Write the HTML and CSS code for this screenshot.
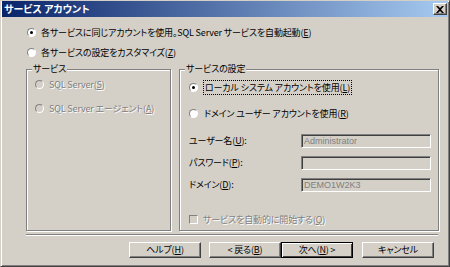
FILE: index.html
```html
<!DOCTYPE html>
<html lang="ja">
<head>
  <meta charset="UTF-8">
  <title>サービス アカウント</title>
  <link rel="stylesheet" href="styles.css">
</head>
<body>

  <div class="window">
    <div class="titlebar">
      <span class="title">サービス アカウント</span>
      <span class="close-btn">
        <svg width="8" height="7" viewBox="0 0 8 7">
          <path d="M0 0h2l2 2 2-2h2L5 3.5 8 7H6L4 5 2 7H0l3-3.5z" fill="#000"/>
        </svg>
      </span>
    </div>

    <div class="content">
      <label class="option top-option">
        <span class="radio checked"></span>
        <span>各サービスに同じアカウントを使用。SQL Server サービスを自動起動(<u>E</u>)</span>
      </label>
      <label class="option top-option second">
        <span class="radio"></span>
        <span>各サービスの設定をカスタマイズ(<u>Z</u>)</span>
      </label>

      <div class="groups">
        <div class="group services">
          <span class="group-label">サービス</span>
          <label class="option disabled">
            <span class="radio"></span>
            <span>SQL Server(<u>S</u>)</span>
          </label>
          <label class="option disabled">
            <span class="radio"></span>
            <span>SQL Server エージェント(<u>A</u>)</span>
          </label>
        </div>

        <div class="group settings">
          <span class="group-label">サービスの設定</span>
          <label class="option account">
            <span class="radio checked"></span>
            <span class="focus">ローカル システム アカウントを使用(<u>L</u>)</span>
          </label>
          <label class="option account">
            <span class="radio"></span>
            <span>ドメイン ユーザー アカウントを使用(<u>R</u>)</span>
          </label>

          <div class="form">
            <span class="form-label">ユーザー名(<u>U</u>):</span>
            <span class="field">Administrator</span>
            <span class="form-label">パスワード(<u>P</u>):</span>
            <span class="field"></span>
            <span class="form-label">ドメイン(<u>D</u>):</span>
            <span class="field">DEMO1W2K3</span>
          </div>

          <label class="option disabled autostart">
            <span class="checkbox"></span>
            <span>サービスを自動的に開始する(<u>Q</u>)</span>
          </label>
        </div>
      </div>

      <div class="separator"></div>

      <div class="buttons">
        <span class="btn help">ヘルプ(<u>H</u>)</span>
        <span class="btn">&lt; 戻る(<u>B</u>)</span>
        <span class="btn default">次へ(<u>N</u>) &gt;</span>
        <span class="btn cancel">キャンセル</span>
      </div>
    </div>
  </div>

</body>
</html>
```

FILE: styles.css
```css
body {
  margin: 0;
  font-family: 'Noto Sans CJK JP', sans-serif;
  font-size: 9px;
  letter-spacing: -0.15px;
  font-feature-settings: "palt";
  color: #000;
  background: #d4d0c8;
}

.window {
  width: 450px;
  height: 267px;
  box-sizing: border-box;
  background: #d4d0c8;
  border: 1px solid;
  border-color: #d4d0c8 #404040 #404040 #d4d0c8;
  box-shadow: inset 1px 1px 0 #fff, inset -1px -1px 0 #808080;
  overflow: hidden;
}

.titlebar {
  height: 16px;
  margin: 0 1px;
  display: flex;
  align-items: center;
  justify-content: space-between;
  padding: 0 1px 0 2px;
  background: linear-gradient(to right, #0a246a, #a6caf0);
}

.title {
  color: #fff;
  font-weight: bold;
  font-size: 10px;
  letter-spacing: 0;
  line-height: 16px;
}

.close-btn {
  width: 14px;
  height: 12px;
  box-sizing: border-box;
  display: flex;
  align-items: center;
  justify-content: center;
  background: #d4d0c8;
  border: 1px solid;
  border-color: #fff #404040 #404040 #fff;
  box-shadow: inset -1px -1px 0 #808080;
}

.content {
  padding: 0 0 0 24px;
}

u {
  text-decoration: underline;
  text-underline-offset: 1px;
}

.option {
  display: flex;
  align-items: center;
  gap: 5px;
  height: 13px;
  line-height: 13px;
  white-space: nowrap;
}

.top-option {
  margin-top: 9px;
  padding-left: 2px;
}

.top-option.second {
  margin-top: 7px;
}

.radio {
  width: 9px;
  height: 9px;
  box-sizing: border-box;
  border-radius: 50%;
  border: 1px solid;
  border-color: #808080 #fff #fff #808080;
  background: #fff;
  display: flex;
  align-items: center;
  justify-content: center;
  flex: none;
}

.radio.checked::after {
  content: "";
  width: 3px;
  height: 3px;
  border-radius: 50%;
  background: #000;
}

.checkbox {
  width: 9px;
  height: 9px;
  box-sizing: border-box;
  border: 1px solid;
  border-color: #808080 #fff #fff #808080;
  background: #d4d0c8;
  flex: none;
}

.disabled {
  color: #808080;
  text-shadow: 1px 1px 0 #fff;
}

.disabled .radio {
  background: #d4d0c8;
}

.groups {
  display: flex;
  gap: 8px;
  margin-top: 10px;
  padding-left: 1px;
}

.group {
  position: relative;
  height: 162px;
  box-sizing: border-box;
  border: 1px solid #808080;
  box-shadow: 1px 1px 0 #fff, inset 1px 1px 0 #fff;
}

.group-label {
  position: absolute;
  top: -8px;
  left: 5px;
  padding: 0 1px;
  background: #d4d0c8;
  line-height: 13px;
}

.services {
  width: 145px;
  padding: 8px 0 0 8px;
}

.services .option + .option {
  margin-top: 11px;
}

.settings {
  width: 260px;
  padding: 11px 9px 0 9px;
}

.account {
  gap: 6px;
}

.account + .account {
  margin-top: 13px;
}

.focus {
  outline: 1px dotted #000;
  outline-offset: 0;
  padding: 0 1px;
}

.form {
  display: grid;
  grid-template-columns: 112px 130px;
  row-gap: 8px;
  margin-top: 14px;
}

.form-label {
  line-height: 14px;
}

.field {
  height: 14px;
  box-sizing: border-box;
  border: 1px solid;
  border-color: #808080 #fff #fff #808080;
  box-shadow: inset 1px 1px 0 #404040;
  background: #d4d0c8;
  color: #808080;
  font-family: 'Liberation Sans', sans-serif;
  font-size: 9px;
  letter-spacing: 0;
  line-height: 12px;
  padding-left: 2px;
}

.autostart {
  margin-top: 21px;
}

.separator {
  width: 412px;
  margin: 3px 0 0 1px;
  border-top: 1px solid #808080;
  border-bottom: 1px solid #fff;
}

.buttons {
  display: flex;
  margin: 6px 0 0 104px;
}

.btn {
  width: 72px;
  height: 16px;
  box-sizing: border-box;
  display: flex;
  align-items: center;
  justify-content: center;
  border: 1px solid;
  border-color: #fff #404040 #404040 #fff;
  box-shadow: inset -1px -1px 0 #808080;
  line-height: 14px;
}

.btn.help {
  margin-right: 8px;
}

.btn.default {
  border-color: #000;
  box-shadow: inset 1px 1px 0 #fff, inset -1px -1px 0 #404040;
}

.btn.cancel {
  margin-left: 9px;
}
```
